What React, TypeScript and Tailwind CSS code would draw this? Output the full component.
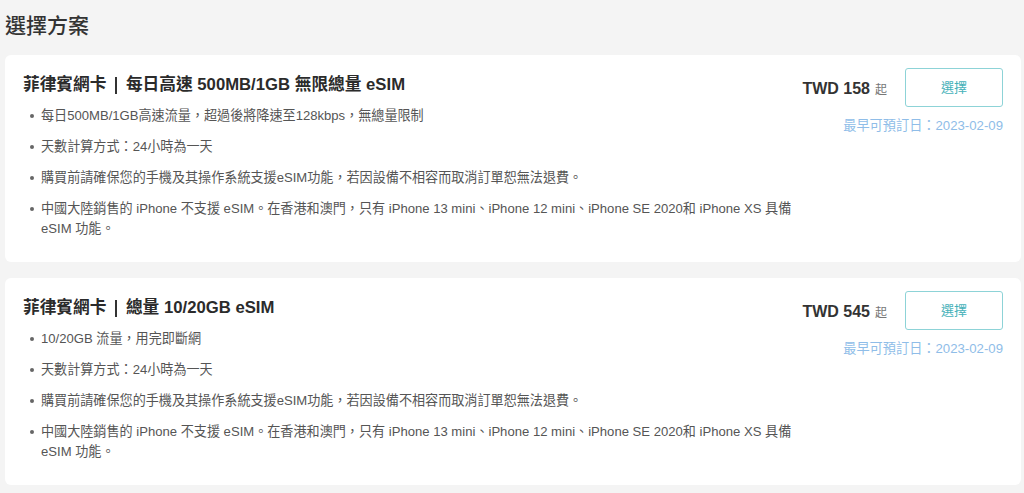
import React from "react";

const font = { fontFamily: '"Liberation Sans", "Noto Sans CJK TC", sans-serif' };

type Plan = { title: [string, string]; price: string; bullets: string[][] };

const plans: Plan[] = [
  {
    title: ["菲律賓網卡", "每日高速 500MB/1GB 無限總量 eSIM"],
    price: "TWD 158",
    bullets: [
      ["每日500MB/1GB高速流量，超過後將降速至128kbps，無總量限制"],
      ["天數計算方式：24小時為一天"],
      ["購買前請確保您的手機及其操作系統支援eSIM功能，若因設備不相容而取消訂單恕無法退費。"],
      ["中國大陸銷售的 iPhone 不支援 eSIM。在香港和澳門，只有 iPhone 13 mini、iPhone 12 mini、iPhone SE 2020和 iPhone XS 具備", "eSIM 功能。"],
    ],
  },
  {
    title: ["菲律賓網卡", "總量 10/20GB eSIM"],
    price: "TWD 545",
    bullets: [
      ["10/20GB 流量，用完即斷網"],
      ["天數計算方式：24小時為一天"],
      ["購買前請確保您的手機及其操作系統支援eSIM功能，若因設備不相容而取消訂單恕無法退費。"],
      ["中國大陸銷售的 iPhone 不支援 eSIM。在香港和澳門，只有 iPhone 13 mini、iPhone 12 mini、iPhone SE 2020和 iPhone XS 具備", "eSIM 功能。"],
    ],
  },
];

function Card({ plan }: { plan: Plan }) {
  return (
    <div className="bg-white rounded-md flex justify-between pl-[18px] pr-[18px] pt-[18px] pb-[23px]">
      <div className="flex flex-col">
        <div className="text-[16.7px] leading-[24px] font-bold text-[#2b2b2b] flex items-center">
          <span>{plan.title[0]}</span>
          <span className="mx-[9px] w-[1.5px] h-[17px] bg-[#333333] block" />
          <span>{plan.title[1]}</span>
        </div>
        <ul className="mt-[9px] flex flex-col gap-[11px]">
          {plan.bullets.map((b, i) => (
            <li key={i} className="flex text-[13.1px] leading-[20px] text-[#555555]">
              <span className="w-[18px] shrink-0 flex justify-center pt-[8px]">
                <span className="w-[4px] h-[4px] rounded-full bg-[#666666] block" />
              </span>
              <span className="flex flex-col">
                {b.map((line, j) => (
                  <span key={j}>{line}</span>
                ))}
              </span>
            </li>
          ))}
        </ul>
      </div>
      <div className="flex flex-col items-end -mt-[5px]">
        <div className="flex items-center gap-[18px]">
          <div className="flex items-baseline pt-[2px]">
            <span className="text-[16px] font-bold text-[#333333]">{plan.price}</span>
            <span className="text-[12px] text-[#777777] ml-[5px]">起</span>
          </div>
          <button className="w-[98px] h-[39px] border border-[#8dd3d7] rounded-[3px] text-[13px] text-[#45b1b9] bg-white">
            選擇
          </button>
        </div>
        <div className="mt-[9px] text-[13.2px] text-[#8fbde8]">最早可預訂日：2023-02-09</div>
      </div>
    </div>
  );
}

export default function App() {
  return (
    <div className="min-h-[493px] w-[1024px] bg-[#f4f4f4] px-[5px] pb-[10px]" style={font}>
      <h1 className="pt-[11px] text-[21px] leading-[30px] text-[#333333] font-medium">選擇方案</h1>
      <div className="mt-[14px] flex flex-col gap-[16px] w-[1016px]">
        {plans.map((p, i) => (
          <Card key={i} plan={p} />
        ))}
      </div>
    </div>
  );
}
